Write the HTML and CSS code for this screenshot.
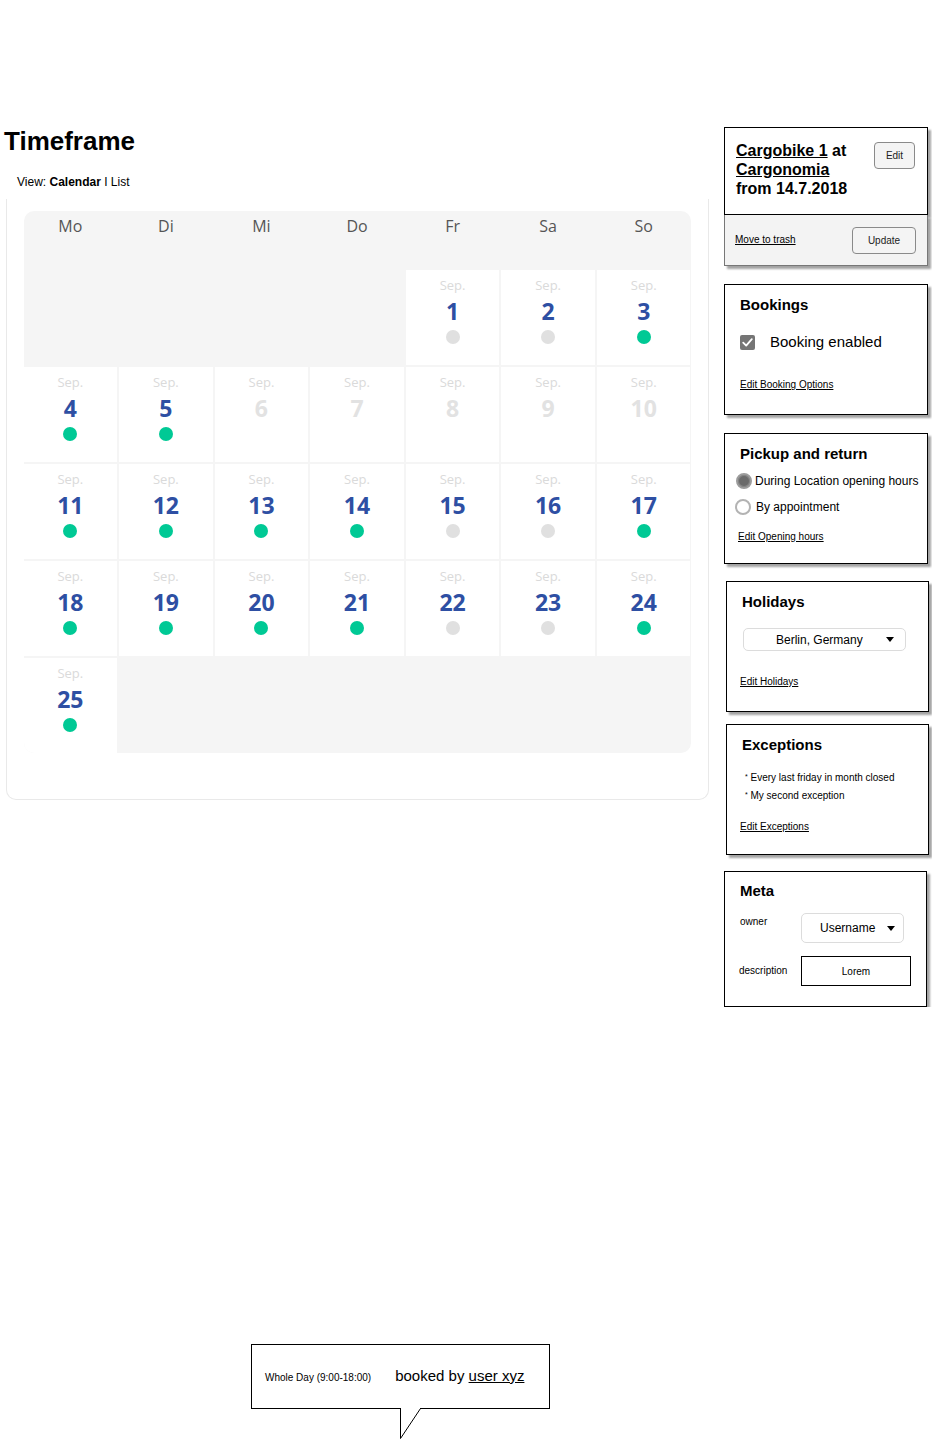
FILE: index.html
```html
<!DOCTYPE html>
<html lang="en">
<head>
<meta charset="utf-8">
<title>Timeframe</title>
<link rel="stylesheet" href="styles.css">
</head>
<body>
<div class="page">
  <div class="main">
    <h1 class="title">Timeframe</h1>
    <div class="view">View: <b>Calendar</b> I List</div>
    <div class="card">
      <div class="cal">
        <div class="dow">Mo</div><div class="dow">Di</div><div class="dow">Mi</div><div class="dow">Do</div><div class="dow">Fr</div><div class="dow">Sa</div><div class="dow">So</div>

        <div class="empty"></div><div class="empty"></div><div class="empty"></div><div class="empty"></div>
        <div class="day"><span class="mon">Sep.</span><span class="num">1</span><span class="dot grey"></span></div>
        <div class="day"><span class="mon">Sep.</span><span class="num">2</span><span class="dot grey"></span></div>
        <div class="day"><span class="mon">Sep.</span><span class="num">3</span><span class="dot"></span></div>

        <div class="day"><span class="mon">Sep.</span><span class="num">4</span><span class="dot"></span></div>
        <div class="day"><span class="mon">Sep.</span><span class="num">5</span><span class="dot"></span></div>
        <div class="day"><span class="mon">Sep.</span><span class="num off">6</span></div>
        <div class="day"><span class="mon">Sep.</span><span class="num off">7</span></div>
        <div class="day"><span class="mon">Sep.</span><span class="num off">8</span></div>
        <div class="day"><span class="mon">Sep.</span><span class="num off">9</span></div>
        <div class="day"><span class="mon">Sep.</span><span class="num off">10</span></div>

        <div class="day"><span class="mon">Sep.</span><span class="num">11</span><span class="dot"></span></div>
        <div class="day"><span class="mon">Sep.</span><span class="num">12</span><span class="dot"></span></div>
        <div class="day"><span class="mon">Sep.</span><span class="num">13</span><span class="dot"></span></div>
        <div class="day"><span class="mon">Sep.</span><span class="num">14</span><span class="dot"></span></div>
        <div class="day"><span class="mon">Sep.</span><span class="num">15</span><span class="dot grey"></span></div>
        <div class="day"><span class="mon">Sep.</span><span class="num">16</span><span class="dot grey"></span></div>
        <div class="day"><span class="mon">Sep.</span><span class="num">17</span><span class="dot"></span></div>

        <div class="day"><span class="mon">Sep.</span><span class="num">18</span><span class="dot"></span></div>
        <div class="day"><span class="mon">Sep.</span><span class="num">19</span><span class="dot"></span></div>
        <div class="day"><span class="mon">Sep.</span><span class="num">20</span><span class="dot"></span></div>
        <div class="day"><span class="mon">Sep.</span><span class="num">21</span><span class="dot"></span></div>
        <div class="day"><span class="mon">Sep.</span><span class="num">22</span><span class="dot grey"></span></div>
        <div class="day"><span class="mon">Sep.</span><span class="num">23</span><span class="dot grey"></span></div>
        <div class="day"><span class="mon">Sep.</span><span class="num">24</span><span class="dot"></span></div>

        <div class="day"><span class="mon">Sep.</span><span class="num">25</span><span class="dot"></span></div>
      </div>
    </div>
  </div>

  <div class="side">
    <div class="box head">
      <div class="head-title"><a href="#">Cargobike 1</a> at<br><a href="#">Cargonomia</a><br>from 14.7.2018</div>
      <button class="btn btn-edit">Edit</button>
    </div>
    <div class="foot">
      <a href="#" class="link">Move to trash</a>
      <button class="btn btn-update">Update</button>
    </div>

    <div class="box panel bookings">
      <div class="ptitle">Bookings</div>
      <div class="check-row">
        <svg class="checkbox" width="15" height="15" viewBox="0 0 15 15"><rect x="0" y="0" width="15" height="15" rx="2" fill="#757575"/><path d="M3.2 7.6 L6.2 10.6 L11.8 4.2" fill="none" stroke="#fff" stroke-width="1.8" stroke-linecap="round" stroke-linejoin="round"/></svg>
        <span>Booking enabled</span>
      </div>
      <a href="#" class="link plink">Edit Booking Options</a>
    </div>

    <div class="box panel pickup">
      <div class="ptitle">Pickup and return</div>
      <div class="radio-row r1"><span class="radio on"></span><span>During Location opening hours</span></div>
      <div class="radio-row r2"><span class="radio"></span><span>By appointment</span></div>
      <a href="#" class="link plink">Edit Opening hours</a>
    </div>

    <div class="box panel holidays">
      <div class="ptitle">Holidays</div>
      <div class="select sel-hol"><span>Berlin, Germany</span><span class="caret"></span></div>
      <a href="#" class="link plink">Edit Holidays</a>
    </div>

    <div class="box panel exceptions">
      <div class="ptitle">Exceptions</div>
      <ul class="exc">
        <li><sup>*</sup> Every last friday in month closed</li>
        <li><sup>*</sup> My second exception</li>
      </ul>
      <a href="#" class="link plink">Edit Exceptions</a>
    </div>

    <div class="box panel meta">
      <div class="ptitle">Meta</div>
      <div class="meta-row owner-row">
        <span class="mlabel">owner</span>
        <div class="select sel-user"><span>Username</span><span class="caret"></span></div>
      </div>
      <div class="meta-row desc-row">
        <span class="mlabel">description</span>
        <div class="input">Lorem</div>
      </div>
    </div>
  </div>
</div>

<div class="tooltip">
  <span class="tt-time">Whole Day (9:00-18:00)</span>
  <span class="tt-booked">booked by <a href="#">user xyz</a></span>
  <svg class="tail" width="22" height="32" viewBox="0 0 22 32"><polygon points="1,0 20,0 20,2 1,31" fill="#fff"/><polyline points="0.5,1.5 0.5,31.5 20.5,1.5" fill="none" stroke="#000" stroke-width="1"/></svg>
</div>
</body>
</html>
```
FILE: styles.css
```css
* { box-sizing: border-box; }

body {
  margin: 0;
  font-family: "Liberation Sans", Arial, sans-serif;
  color: #000;
  background: #fff;
}

a { color: #000; }

.page {
  display: flex;
  align-items: flex-start;
}

.main {
  flex: none;
  width: 724px;
}

.title {
  margin: 126px 0 0 4px;
  font-size: 26px;
  line-height: 30px;
  font-weight: bold;
}

.view {
  margin: 19px 0 0 17px;
  font-size: 12px;
  line-height: 14px;
}

.card {
  margin: 10px 0 0 6px;
  width: 703px;
  border: 1.5px solid #e9e9e9;
  border-top: none;
  border-radius: 0 0 10px 10px;
  padding: 12px 17.5px 45.5px 16.5px;
}

.cal {
  display: grid;
  grid-template-columns: repeat(7, 1fr);
  grid-template-rows: 57px repeat(5, 95px);
  gap: 2px;
  background: #f5f5f5;
  border-radius: 10px;
  overflow: hidden;
  font-family: "Open Sans", "Liberation Sans", sans-serif;
}

.dow {
  text-align: center;
  font-size: 16px;
  line-height: 22px;
  padding-top: 4px;
  color: #555;
}

.day {
  background: #fff;
  display: flex;
  flex-direction: column;
  align-items: center;
  padding-top: 6px;
}

.mon {
  font-size: 13px;
  line-height: 18px;
  color: #dadada;
}

.num {
  font-size: 23px;
  line-height: 30px;
  font-weight: 700;
  color: #2e4fa3;
  margin-top: 2px;
}

.num.off { color: #e2e2e2; }

.dot {
  width: 14px;
  height: 14px;
  border-radius: 50%;
  margin-top: 4px;
  background: #00c995;
}

.dot.grey { background: #e0e0e0; }

/* side panels */
.side {
  flex: none;
  width: 208px;
  padding-top: 127px;
}

.box {
  border: 1px solid #000;
  background: #fff;
  box-shadow: 3px 3px 2px #a3a3a3;
}

.head {
  width: 204px;
  height: 88px;
  display: flex;
  justify-content: space-between;
  align-items: flex-start;
  padding: 12.5px 12px 0 11px;
}

.head-title {
  font-size: 16px;
  line-height: 19px;
  font-weight: bold;
}

.btn {
  font-family: "Liberation Sans", Arial, sans-serif;
  font-size: 10px;
  color: #222;
  background: #f4f4f4;
  border: 1px solid #8a8a8a;
  border-radius: 4px;
  padding: 0;
  height: 27px;
}

.btn-edit {
  width: 41px;
  margin-top: 1px;
  flex: none;
}

.foot {
  width: 204px;
  height: 51px;
  background: #f3f3f3;
  border: 1px solid #777;
  border-top: none;
  box-shadow: 3px 3px 2px #a3a3a3;
  display: flex;
  justify-content: space-between;
  align-items: center;
  padding: 0 11px 0 10px;
}

.btn-update { width: 64px; }

.link {
  font-size: 10px;
  line-height: 12px;
  color: #000;
  text-decoration: underline;
}

.panel {
  width: 204px;
  height: 131px;
  padding: 11px 15px 0 15px;
  display: flex;
  flex-direction: column;
  align-items: flex-start;
}

.ptitle {
  font-size: 15px;
  line-height: 18px;
  font-weight: bold;
}

.plink { display: block; }

.bookings { margin-top: 18px; }

.check-row {
  display: flex;
  align-items: center;
  gap: 15px;
  margin-top: 19px;
  font-size: 15px;
  line-height: 18px;
}

.checkbox { flex: none; display: block; }

.bookings .plink { margin-top: 28px; }

.pickup { margin-top: 18px; }

.radio-row {
  display: flex;
  align-items: center;
  font-size: 12px;
  line-height: 18px;
  margin-left: -4px;
  white-space: nowrap;
}

.r1 { margin-top: 9px; gap: 3px; }
.r2 { margin-top: 8px; gap: 5px; margin-left: -5px; }

.radio {
  flex: none;
  width: 16px;
  height: 16px;
  border-radius: 50%;
  border: 2px solid #b3b3b3;
  background: #fff;
}

.radio.on {
  border-color: #9c9c9c;
  background: #6b6b6b;
  box-shadow: inset 0 0 0 1px #858585;
}

.pickup .plink { margin-top: 15px; margin-left: -2px; }

.holidays {
  margin-top: 17px;
  margin-left: 2px;
  width: 203px;
}

.select {
  display: flex;
  align-items: center;
  border: 1px solid #dcdcdc;
  border-radius: 5px;
  font-size: 12px;
  background: #fff;
}

.sel-hol {
  width: 163px;
  height: 23px;
  margin-top: 17px;
  margin-left: 1px;
  padding: 0 11px 0 32px;
}

.caret {
  margin-left: auto;
  width: 0;
  height: 0;
  border-left: 4.5px solid transparent;
  border-right: 4.5px solid transparent;
  border-top: 5px solid #000;
}

.holidays .plink { margin-top: 25px; margin-left: -2px; }

.exceptions {
  margin-top: 12px;
  margin-left: 2px;
  width: 203px;
}

.exc {
  list-style: none;
  margin: 13.5px 0 0 3px;
  padding: 0;
  font-size: 10px;
  line-height: 17px;
}

.exc sup {
  font-size: 7px;
  vertical-align: 2px;
}

.exceptions .plink { margin-top: 17.5px; margin-left: -2px; }

.meta {
  margin-top: 16px;
  width: 203px;
  height: 136px;
  padding-top: 10px;
}

.meta-row {
  display: flex;
  align-items: flex-start;
}

.mlabel {
  width: 61px;
  flex: none;
  font-size: 10px;
  line-height: 12px;
}

.owner-row { margin-top: 13px; }
.owner-row .mlabel { padding-top: 3px; }

.sel-user {
  width: 103px;
  height: 30px;
  padding: 0 8px 0 18px;
}

.desc-row { margin-top: 13px; }
.desc-row .mlabel { padding-top: 9px; margin-left: -1px; width: 62px; }

.input {
  width: 110px;
  height: 30px;
  border: 1px solid #000;
  font-size: 10px;
  display: flex;
  align-items: center;
  justify-content: center;
}

/* tooltip overlay */
.tooltip {
  position: absolute;
  left: 251px;
  top: 1344px;
  width: 299px;
  height: 65px;
  border: 1px solid #000;
  background: #fff;
  display: flex;
  align-items: center;
  padding-left: 13px;
}

.tt-time {
  font-size: 10px;
  margin-top: 1px;
}

.tt-booked {
  font-size: 15px;
  margin-left: 24px;
  margin-top: -3px;
}

.tt-booked a { color: #000; text-decoration: underline; }

.tail {
  position: absolute;
  left: 148px;
  top: 62px;
  display: block;
}
```
